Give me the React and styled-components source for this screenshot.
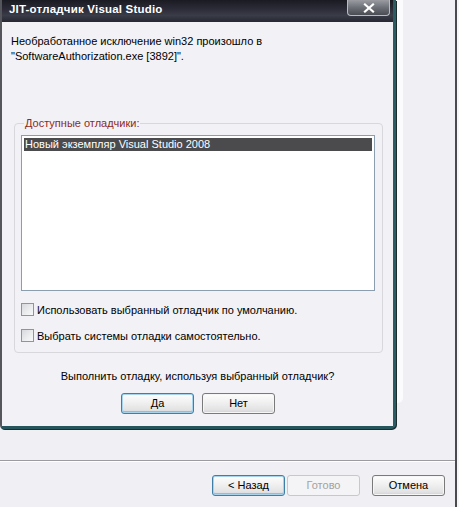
import React from 'react';
import styled, { createGlobalStyle, css } from 'styled-components';

const GlobalStyle = createGlobalStyle`
  html, body {
    margin: 0;
    padding: 0;
    background: #f6f6f6;
  }
  body {
    font-family: "Liberation Sans", Arial, sans-serif;
    font-size: 11px;
    color: #000;
  }
`;

const Desktop = styled.div`
  position: relative;
  width: 459px;
  height: 507px;
  overflow: hidden;
`;

/* wizard window in the background */
const Wizard = styled.div`
  width: 455px;
  height: 507px;
  background: #f0f0f4;
  border-right: 2px solid #4a4a4e;
  display: flex;
  flex-direction: column;
`;

const WizardContent = styled.div`
  height: 460px;
  display: flex;
`;

const HiddenPanel = styled.div`
  width: 403px;
  height: 403px;
  background: #fbfbfd;
  border-bottom-right-radius: 5px;
`;

const Separator = styled.div`
  height: 1px;
  background: #9c9ca0;
  border-bottom: 1px solid #ffffff;
`;

const WizardFooter = styled.div`
  display: flex;
  align-items: center;
  padding: 13px 0 0 212px;
`;

const Button = styled.button`
  box-sizing: border-box;
  width: 73px;
  height: 21px;
  margin: 0 0 0 ${({ $gap }) => $gap || 0}px;
  padding: 0 0 1px;
  font-family: "Liberation Sans", Arial, sans-serif;
  font-size: 11px;
  color: #000;
  border: 1px solid #7a7a7a;
  border-radius: 3px;
  background: linear-gradient(#fdfdfd 0%, #f0f0f0 45%, #e2e2e4 85%, #cfcfd3 100%);
  box-shadow: inset 0 0 0 1px #f6f6f6;
  ${({ $default }) => $default && css`
    border-color: #3f7fa6;
    box-shadow: inset 0 0 0 1px #a8d3ec, inset 0 -1px 0 1px #8cc0e0;
  `}
  ${({ disabled }) => disabled && css`
    color: #a2a2a2;
    border-color: #c8c8cc;
    background: #f4f4f6;
    box-shadow: none;
  `}
`;

/* the JIT dialog on top */
const Dialog = styled.div`
  position: absolute;
  left: 0;
  top: 0;
  width: 396px;
  height: 429px;
  box-sizing: border-box;
  display: flex;
  flex-direction: column;
  background: #2c2e38;
  border-left: 2px solid #55565c;
  border-right: 3px solid #2a5c64;
  border-bottom: 3px solid #27555c;
  border-bottom-left-radius: 4px;
  border-bottom-right-radius: 5px;
  box-shadow: 1px 1px 0 #1d2b2e;
`;

const TitleBar = styled.div`
  height: 22px;
  flex-shrink: 0;
  display: flex;
  align-items: flex-start;
  justify-content: space-between;
  background: linear-gradient(#1a1b22 0%, #2a2b36 40%, #3a3c48 70%, #262731 100%);
`;

const Title = styled.div`
  padding: 3px 0 0 7px;
  color: #ffffff;
  font-family: "Liberation Sans", Arial, sans-serif;
  font-weight: bold;
  font-size: 11.5px;
  letter-spacing: 0.2px;
`;

const CloseButton = styled.div`
  width: 43px;
  height: 16px;
  margin-right: 3px;
  box-sizing: border-box;
  border: 1px solid #b9bbc2;
  border-top: none;
  border-radius: 0 0 4px 4px;
  background: linear-gradient(#9a9ca2 0%, #6e7078 50%, #4a4c54 100%);
  display: flex;
  align-items: center;
  justify-content: center;
`;

const Body = styled.div`
  flex: 1;
  background: #f1f1f6;
  display: flex;
  flex-direction: column;
  padding: 12px 0 0 9px;
`;

const Message = styled.div`
  line-height: 15px;
`;

const GroupBox = styled.fieldset`
  box-sizing: border-box;
  width: 369px;
  height: 236px;
  margin: 53px 0 0 3px;
  padding: 0 0 0 6px;
  border: 1px solid #d7d7dc;
  border-radius: 4px;
  display: flex;
  flex-direction: column;
`;

const Legend = styled.legend`
  padding: 0 1px;
  margin-left: 3px;
  color: #8e2a22;
  line-height: 13px;
`;

const ListBox = styled.div`
  box-sizing: border-box;
  width: 354px;
  height: 156px;
  margin-top: 5px;
  padding: 2px 2px;
  background: #ffffff;
  border: 1px solid #8a9eb0;
`;

const ListItem = styled.div`
  height: 13px;
  line-height: 13px;
  padding-left: 1px;
  color: ${({ $selected }) => ($selected ? '#ffffff' : '#000')};
  background: ${({ $selected }) => ($selected ? '#4b4b4d' : 'transparent')};
`;

const CheckRow = styled.label`
  display: flex;
  align-items: center;
  height: 13px;
  margin-top: ${({ $first }) => ($first ? 12 : 13)}px;
  gap: 3px;
`;

const CheckBox = styled.span`
  box-sizing: border-box;
  width: 13px;
  height: 13px;
  border: 1px solid #8d959e;
  background: linear-gradient(135deg, #d6d8dc 0%, #eceef0 60%, #f8f8f9 100%);
`;

const Question = styled.div`
  margin-top: 17px;
  padding-right: 9px;
  text-align: center;
  line-height: 13px;
`;

const ButtonRow = styled.div`
  display: flex;
  justify-content: flex-start;
  padding-left: 110px;
  margin-top: 10px;
`;

const XIcon = () => (
  <svg width="14" height="10" viewBox="0 0 14 10">
    <path d="M3 1.5 L11 8.5 M11 1.5 L3 8.5" stroke="#ffffff" strokeWidth="2.2" strokeLinecap="square" />
  </svg>
);

export default function App() {
  return (
    <Desktop>
      <GlobalStyle />
      <Wizard>
        <WizardContent>
          <HiddenPanel />
        </WizardContent>
        <Separator />
        <WizardFooter>
          <Button $default>&lt; Назад</Button>
          <Button disabled $gap={2}>Готово</Button>
          <Button $gap={12}>Отмена</Button>
        </WizardFooter>
      </Wizard>

      <Dialog>
        <TitleBar>
          <Title>JIT-отладчик Visual Studio</Title>
          <CloseButton>
            <XIcon />
          </CloseButton>
        </TitleBar>
        <Body>
          <Message>
            Необработанное исключение win32 произошло в
            <br />
            "SoftwareAuthorization.exe [3892]".
          </Message>
          <GroupBox>
            <Legend>Доступные отладчики:</Legend>
            <ListBox>
              <ListItem $selected>Новый экземпляр Visual Studio 2008</ListItem>
            </ListBox>
            <CheckRow $first>
              <CheckBox />
              Использовать выбранный отладчик по умолчанию.
            </CheckRow>
            <CheckRow>
              <CheckBox />
              Выбрать системы отладки самостоятельно.
            </CheckRow>
          </GroupBox>
          <Question>Выполнить отладку, используя выбранный отладчик?</Question>
          <ButtonRow>
            <Button $default>Да</Button>
            <Button $gap={8}>Нет</Button>
          </ButtonRow>
        </Body>
      </Dialog>
    </Desktop>
  );
}
